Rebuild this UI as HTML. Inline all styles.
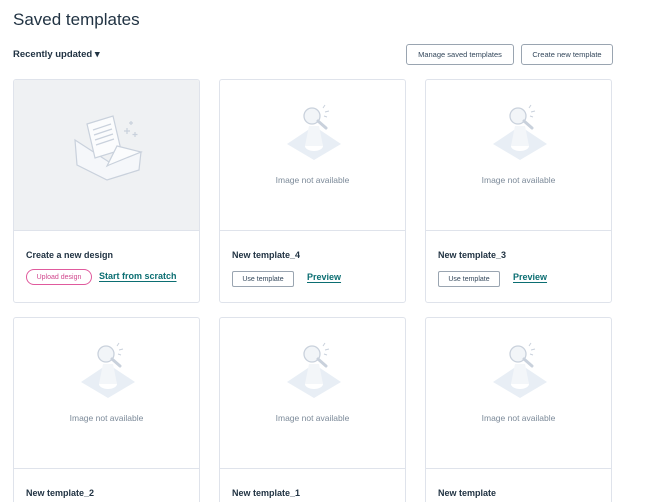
<!DOCTYPE html>
<html><head><meta charset="utf-8"><style>
*{margin:0;padding:0;box-sizing:border-box}
html,body{width:670px;height:502px;overflow:hidden}
body{background:#fff;font-family:"Liberation Sans",sans-serif;color:#33475b;position:relative}
.abs{position:absolute}
h1{position:absolute;left:13px;top:10px;font-size:17px;font-weight:normal;color:#213343}
.sort{left:13px;top:49px;font-size:9.5px;font-weight:bold;color:#213343}
.btn{position:absolute;border:1px solid #9aa5b1;border-radius:3px;font-size:7.5px;color:#33475b;display:flex;align-items:center;justify-content:center;background:#fff}
.card{position:absolute;width:187px;border:1px solid #dfe3eb;border-radius:3px;background:#fff;overflow:hidden}
.r2{height:185px;border-bottom:none;border-radius:3px 3px 0 0}
.img{position:absolute;left:0;top:0;right:0;height:151px;border-bottom:1px solid #dfe3eb}
.na{position:absolute;left:0;right:0;top:95px;text-align:center;font-size:8.5px;color:#7c8a99}
.title{position:absolute;left:12px;top:170px;font-size:9px;font-weight:bold;color:#213343}
.use{position:absolute;left:12px;top:191px;width:62px;height:16px;border:1px solid #9aa5b1;border-radius:2px;font-size:7px;display:flex;align-items:center;justify-content:center;color:#33475b}
.prev{position:absolute;left:87px;top:192px;font-size:9px;font-weight:bold;color:#0b6e72;text-decoration:underline;text-underline-offset:2px}
</style></head><body>
<h1>Saved templates</h1>
<div class="abs sort">Recently updated ▾</div>
<div class="btn" style="left:406px;top:44px;width:108px;height:21px">Manage saved templates</div>
<div class="btn" style="left:521px;top:44px;width:92px;height:21px">Create new template</div>

<div class="card" style="left:13px;top:79px;height:224px">
 <div class="img" style="background:#eff1f3">
  <svg class="abs" style="left:55px;top:30px" width="80" height="80" viewBox="0 0 80 80" fill="none" stroke="#c9d1dc" stroke-width="1.2">
   <path d="M6 30 L40 52 L72 42 L70 60 L38 70 L8 55 Z" fill="#f5f7fa"/>
   <path d="M18 14 L44 6 L52 40 L26 48 Z" fill="#fbfcfd"/>
   <path d="M24 20 L42 14 M25 25 L43 19 M26 30 L44 24 M27 35 L45 29"/>
   <path d="M38 56 L48 36 L72 42 L40 55 Z" fill="#fbfcfd"/>
   <path d="M58 18 v6 M55 21 h6 M66 22 v5 M63.5 24.5 h5 M62 11 v4 M60 13 h4"/>
  </svg>
 </div>
 <div class="title">Create a new design</div>
 <div class="abs" style="left:12px;top:189px;width:66px;height:16px;border:1px solid #e05a9d;border-radius:9px;font-size:7px;color:#d1478d;display:flex;align-items:center;justify-content:center">Upload design</div>
 <div class="prev" style="left:85px;top:191px">Start from scratch</div>
</div>

<div class="card" style="left:219px;top:79px;height:224px"><div class="img"><svg class="abs" style="left:64px;top:24px" width="60" height="56" viewBox="0 0 60 56"><path d="M30 22 L57 40 L30 56 L3 40 Z" fill="#e8eef5"/><ellipse cx="30" cy="42" rx="9" ry="5" fill="#fff"/><path d="M25 22 L21 42 L39 42 L35 22 Z" fill="#f3f6f9"/><circle cx="28" cy="12" r="8" fill="#f2f5f8" stroke="#c9d1dc" stroke-width="1.3"/><path d="M34 17 L42 24" stroke="#c9d1dc" stroke-width="3" stroke-linecap="round"/><path d="M39 4 l2 -3 M41 8 l4 -1 M40 12 l3 1" stroke="#c9d1dc" stroke-width="1"/></svg><div class="na">Image not available</div></div><div class="title">New template_4</div><div class="use">Use template</div><div class="prev">Preview</div></div>
<div class="card" style="left:425px;top:79px;height:224px"><div class="img"><svg class="abs" style="left:64px;top:24px" width="60" height="56" viewBox="0 0 60 56"><path d="M30 22 L57 40 L30 56 L3 40 Z" fill="#e8eef5"/><ellipse cx="30" cy="42" rx="9" ry="5" fill="#fff"/><path d="M25 22 L21 42 L39 42 L35 22 Z" fill="#f3f6f9"/><circle cx="28" cy="12" r="8" fill="#f2f5f8" stroke="#c9d1dc" stroke-width="1.3"/><path d="M34 17 L42 24" stroke="#c9d1dc" stroke-width="3" stroke-linecap="round"/><path d="M39 4 l2 -3 M41 8 l4 -1 M40 12 l3 1" stroke="#c9d1dc" stroke-width="1"/></svg><div class="na">Image not available</div></div><div class="title">New template_3</div><div class="use">Use template</div><div class="prev">Preview</div></div>
<div class="card r2" style="left:13px;top:317px"><div class="img"><svg class="abs" style="left:64px;top:24px" width="60" height="56" viewBox="0 0 60 56"><path d="M30 22 L57 40 L30 56 L3 40 Z" fill="#e8eef5"/><ellipse cx="30" cy="42" rx="9" ry="5" fill="#fff"/><path d="M25 22 L21 42 L39 42 L35 22 Z" fill="#f3f6f9"/><circle cx="28" cy="12" r="8" fill="#f2f5f8" stroke="#c9d1dc" stroke-width="1.3"/><path d="M34 17 L42 24" stroke="#c9d1dc" stroke-width="3" stroke-linecap="round"/><path d="M39 4 l2 -3 M41 8 l4 -1 M40 12 l3 1" stroke="#c9d1dc" stroke-width="1"/></svg><div class="na">Image not available</div></div><div class="title">New template_2</div></div>
<div class="card r2" style="left:219px;top:317px"><div class="img"><svg class="abs" style="left:64px;top:24px" width="60" height="56" viewBox="0 0 60 56"><path d="M30 22 L57 40 L30 56 L3 40 Z" fill="#e8eef5"/><ellipse cx="30" cy="42" rx="9" ry="5" fill="#fff"/><path d="M25 22 L21 42 L39 42 L35 22 Z" fill="#f3f6f9"/><circle cx="28" cy="12" r="8" fill="#f2f5f8" stroke="#c9d1dc" stroke-width="1.3"/><path d="M34 17 L42 24" stroke="#c9d1dc" stroke-width="3" stroke-linecap="round"/><path d="M39 4 l2 -3 M41 8 l4 -1 M40 12 l3 1" stroke="#c9d1dc" stroke-width="1"/></svg><div class="na">Image not available</div></div><div class="title">New template_1</div></div>
<div class="card r2" style="left:425px;top:317px"><div class="img"><svg class="abs" style="left:64px;top:24px" width="60" height="56" viewBox="0 0 60 56"><path d="M30 22 L57 40 L30 56 L3 40 Z" fill="#e8eef5"/><ellipse cx="30" cy="42" rx="9" ry="5" fill="#fff"/><path d="M25 22 L21 42 L39 42 L35 22 Z" fill="#f3f6f9"/><circle cx="28" cy="12" r="8" fill="#f2f5f8" stroke="#c9d1dc" stroke-width="1.3"/><path d="M34 17 L42 24" stroke="#c9d1dc" stroke-width="3" stroke-linecap="round"/><path d="M39 4 l2 -3 M41 8 l4 -1 M40 12 l3 1" stroke="#c9d1dc" stroke-width="1"/></svg><div class="na">Image not available</div></div><div class="title">New template</div></div>
</body></html>
